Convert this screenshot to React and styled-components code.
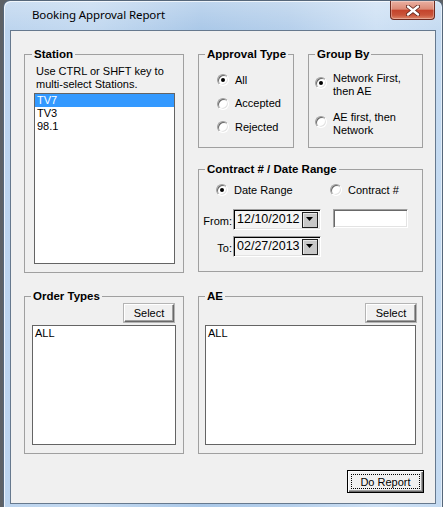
import React from 'react';
import styled, { createGlobalStyle } from 'styled-components';

const Global = createGlobalStyle`
  html, body { margin: 0; padding: 0; }
  body {
    background: #5d6165;
    width: 443px;
    height: 507px;
    overflow: hidden;
    font-family: "Liberation Sans", Arial, sans-serif;
    font-size: 11px;
    color: #000;
  }
  * { box-sizing: border-box; }
`;

const Window = styled.div`
  margin-left: 3px;
  width: 440px;
  height: 507px;
  border: 1px solid #56677a;
  border-bottom: none;
  border-radius: 7px 7px 0 0;
  background:
    linear-gradient(180deg, rgba(255,255,255,0.25) 0, rgba(255,255,255,0) 30px),
    linear-gradient(90deg, #bcd4ee 0%, #c3d9f0 20%, #aac8e8 45%, #b5cfeb 65%, #cde0f4 85%, #c4daf1 100%);
  box-shadow: inset 1px 1px 0 rgba(255,255,255,0.7), inset -1px 0 0 rgba(255,255,255,0.5);
  padding: 0 6px 3px 6px;
  display: flex;
  flex-direction: column;
`;

const TitleBar = styled.div`
  height: 29px;
  display: flex;
  align-items: flex-start;
  padding-left: 22px;
`;

const TitleText = styled.span`
  font-family: "Noto Sans", "Open Sans", sans-serif;
  font-size: 11.5px;
  line-height: 16px;
  margin-top: 6px;
  color: #000;
  letter-spacing: -0.1px;
`;

const CloseButton = styled.div`
  margin-left: auto;
  margin-right: 1px;
  width: 45px;
  height: 19px;
  border: 1px solid #6e2a1f;
  border-top: none;
  border-radius: 0 0 4px 4px;
  background: linear-gradient(180deg, #eab0a2 0%, #dc8a76 45%, #c4442c 52%, #c9543a 78%, #de8669 100%);
  box-shadow: inset 0 0 0 1px rgba(255,255,255,0.3);
  display: flex;
  align-items: center;
  justify-content: center;
`;

const Client = styled.div`
  flex: 1;
  background: #f0f0f0;
  border: 1px solid #66798e;
  padding: 16px 0 0 13px;
  display: grid;
  grid-template-columns: 160px 225px;
  grid-template-rows: 226px 165px auto;
  column-gap: 14px;
  row-gap: 16px;
`;

const Group = styled.fieldset`
  margin: 0;
  padding: 0;
  min-width: 0;
  border: 1px solid #a0a0a0;
  display: flex;
  flex-direction: column;
  width: ${p => p.$w || 'auto'};
`;

const Legend = styled.legend`
  margin-left: ${p => p.$ml ?? 6}px;
  padding: 0 2px;
  font-weight: bold;
  font-size: 11.5px;
  line-height: 15px;
  color: #000;
`;

const StationBody = styled.div`
  flex: 1;
  display: flex;
  flex-direction: column;
  padding: 3px 8px 8px 9px;
`;

const Hint = styled.div`
  line-height: 13px;
  margin-left: 2px;
  margin-bottom: 2px;
`;

const ListBox = styled.div`
  flex: 1;
  background: #fff;
  border: 1px solid #646464;
  padding-top: ${p => p.$pt ?? 0}px;
  overflow: hidden;
`;

const ListItem = styled.div`
  height: 13px;
  line-height: 13px;
  padding-left: 2px;
  background: ${p => (p.$selected ? '#3399ff' : 'transparent')};
  color: ${p => (p.$selected ? '#fff' : '#000')};
`;

const RightColumn = styled.div`
  display: grid;
  grid-template-rows: 101px 110px;
  row-gap: 14px;
`;

const TopRow = styled.div`
  display: flex;
  gap: 14px;
`;

const RadioList = styled.div`
  display: flex;
  flex-direction: column;
  gap: ${p => p.$gap}px;
  padding: 10px 0 0 ${p => p.$pl}px;
`;

const RadioItem = styled.label`
  display: flex;
  align-items: ${p => (p.$top ? 'flex-start' : 'center')};
  gap: 6px;
  min-height: 16px;
  line-height: 13px;
  width: ${p => (p.$w ? `${p.$w}px` : 'auto')};
`;

const RadioCircle = styled.span`
  flex: none;
  width: 12px;
  height: 12px;
  border-radius: 50%;
  background: #fff;
  border: 1px solid;
  border-color: #a0a0a0 #ffffff #ffffff #a0a0a0;
  box-shadow: inset 1px 1px 0 #696969, inset -1px -1px 0 #e3e3e3;
  display: flex;
  align-items: center;
  justify-content: center;
  margin-top: ${p => p.$mt ?? 0}px;
  &::after {
    content: '';
    width: 4px;
    height: 4px;
    border-radius: 50%;
    background: ${p => (p.$checked ? '#000' : 'transparent')};
  }
`;

const ContractBody = styled.div`
  display: flex;
  flex-direction: column;
  padding: 5px 0 0 6px;
`;

const RadioRow = styled.div`
  display: flex;
  padding-left: 11px;
`;

const DateGrid = styled.div`
  margin-top: 11px;
  display: grid;
  grid-template-columns: 28px 88px 75px;
  grid-template-rows: 21px 21px;
  column-gap: 0;
  row-gap: 6px;
`;

const FieldLabel = styled.span`
  justify-self: end;
  align-self: center;
  margin-top: 3px;
  white-space: nowrap;
  margin-right: 1px;
`;

const Combo = styled.div`
  display: flex;
  align-items: center;
  border: 1px solid;
  border-color: #a0a0a0 #ffffff #ffffff #a0a0a0;
  box-shadow: inset 1px 1px 0 #000, inset -1px -1px 0 #e3e3e3;
  background: #f4f4f4;
  padding: 1px 2px 1px 3px;
  font-size: 12.5px;
`;

const ComboText = styled.span`
  flex: 1;
  line-height: 15px;
`;

const DropButton = styled.span`
  width: 16px;
  height: 16px;
  background: #c8c8c8;
  border: 1px solid #202020;
  box-shadow: inset 1px 1px 0 #e8e8e8;
  display: flex;
  align-items: center;
  justify-content: center;
`;

const TextBox = styled.div`
  grid-column: 3;
  grid-row: 1;
  margin-left: 12px;
  height: 19px;
  width: 75px;
  background: #fff;
  border: 1px solid;
  border-color: #a0a0a0 #ffffff #ffffff #a0a0a0;
  box-shadow: inset 1px 1px 0 #696969, inset -1px -1px 0 #e3e3e3;
`;

const ListGroupBody = styled.div`
  flex: 1;
  display: flex;
  flex-direction: column;
  padding: 0 ${p => p.$pr}px 8px ${p => p.$pl}px;
`;

const SmallButton = styled.button`
  align-self: flex-end;
  margin-right: ${p => p.$mr ?? 0}px;
  margin-bottom: 3px;
  width: 50px;
  height: 18px;
  padding: 0;
  font-family: inherit;
  font-size: 11px;
  color: #000;
  background: #f0f0f0;
  border: 1px solid;
  border-color: #ffffff #696969 #696969 #ffffff;
  box-shadow: inset -1px -1px 0 #a0a0a0, 0 0 0 0 transparent;
  outline: 1px solid #b4b4b4;
  outline-offset: 0;
`;

const Footer = styled.div`
  grid-column: 2;
  display: flex;
  justify-content: flex-end;
`;

const DefaultButton = styled.button`
  width: 77px;
  height: 23px;
  margin-right: -1px;
  padding: 0;
  font-family: inherit;
  font-size: 11px;
  color: #000;
  background: #f0f0f0;
  border: 1px solid #000;
  box-shadow: inset 1px 1px 0 #ffffff, inset -1px -1px 0 #696969, inset -2px -2px 0 #a0a0a0;
  outline: 1px dotted #000;
  outline-offset: -5px;
`;

function Radio({ checked, children, top, mt, w }) {
  return (
    <RadioItem $top={top} $w={w}>
      <RadioCircle $checked={checked} $mt={mt} />
      <span>{children}</span>
    </RadioItem>
  );
}

function DateCombo({ value }) {
  return (
    <Combo>
      <ComboText>{value}</ComboText>
      <DropButton>
        <svg width="8" height="5" viewBox="0 0 8 5">
          <path d="M0 0 H7 L3.5 4 Z" fill="#000" />
        </svg>
      </DropButton>
    </Combo>
  );
}

export default function App() {
  return (
    <>
      <Global />
      <Window>
        <TitleBar>
          <TitleText>Booking Approval Report</TitleText>
          <CloseButton>
            <svg width="14" height="11" viewBox="0 0 14 11">
              <path d="M2 1.5 L12 9.5 M12 1.5 L2 9.5" stroke="#5a2118" strokeWidth="4" strokeLinecap="round" />
              <path d="M2 1.5 L12 9.5 M12 1.5 L2 9.5" stroke="#ffffff" strokeWidth="2.4" strokeLinecap="round" />
            </svg>
          </CloseButton>
        </TitleBar>
        <Client>
          <Group>
            <Legend $ml={7}>Station</Legend>
            <StationBody>
              <Hint>
                Use CTRL or SHFT key to
                <br />
                multi-select Stations.
              </Hint>
              <ListBox>
                <ListItem $selected>TV7</ListItem>
                <ListItem>TV3</ListItem>
                <ListItem>98.1</ListItem>
              </ListBox>
            </StationBody>
          </Group>

          <RightColumn>
            <TopRow>
              <Group $w="96px">
                <Legend>Approval Type</Legend>
                <RadioList $gap={7.5} $pl={18}>
                  <Radio checked>All</Radio>
                  <Radio>Accepted</Radio>
                  <Radio>Rejected</Radio>
                </RadioList>
              </Group>
              <Group $w="115px">
                <Legend>Group By</Legend>
                <RadioList $gap={13} $pl={6}>
                  <Radio checked top mt={5}>
                    Network First,
                    <br />
                    then AE
                  </Radio>
                  <Radio top mt={5}>
                    AE first, then
                    <br />
                    Network
                  </Radio>
                </RadioList>
              </Group>
            </TopRow>
            <Group>
              <Legend>Contract # / Date Range</Legend>
              <ContractBody>
                <RadioRow>
                  <Radio checked w={114}>Date Range</Radio>
                  <Radio>Contract #</Radio>
                </RadioRow>
                <DateGrid>
                  <FieldLabel>From:</FieldLabel>
                  <DateCombo value="12/10/2012" />
                  <TextBox />
                  <FieldLabel>To:</FieldLabel>
                  <DateCombo value="02/27/2013" />
                </DateGrid>
              </ContractBody>
            </Group>
          </RightColumn>

          <Group>
            <Legend>Order Types</Legend>
            <ListGroupBody $pl={7} $pr={7}>
              <SmallButton $mr={2}>Select</SmallButton>
              <ListBox $pt={1}>
                <ListItem>ALL</ListItem>
              </ListBox>
            </ListGroupBody>
          </Group>

          <Group>
            <Legend>AE</Legend>
            <ListGroupBody $pl={6} $pr={6}>
              <SmallButton>Select</SmallButton>
              <ListBox $pt={1}>
                <ListItem>ALL</ListItem>
              </ListBox>
            </ListGroupBody>
          </Group>

          <Footer>
            <DefaultButton>Do Report</DefaultButton>
          </Footer>
        </Client>
      </Window>
    </>
  );
}
